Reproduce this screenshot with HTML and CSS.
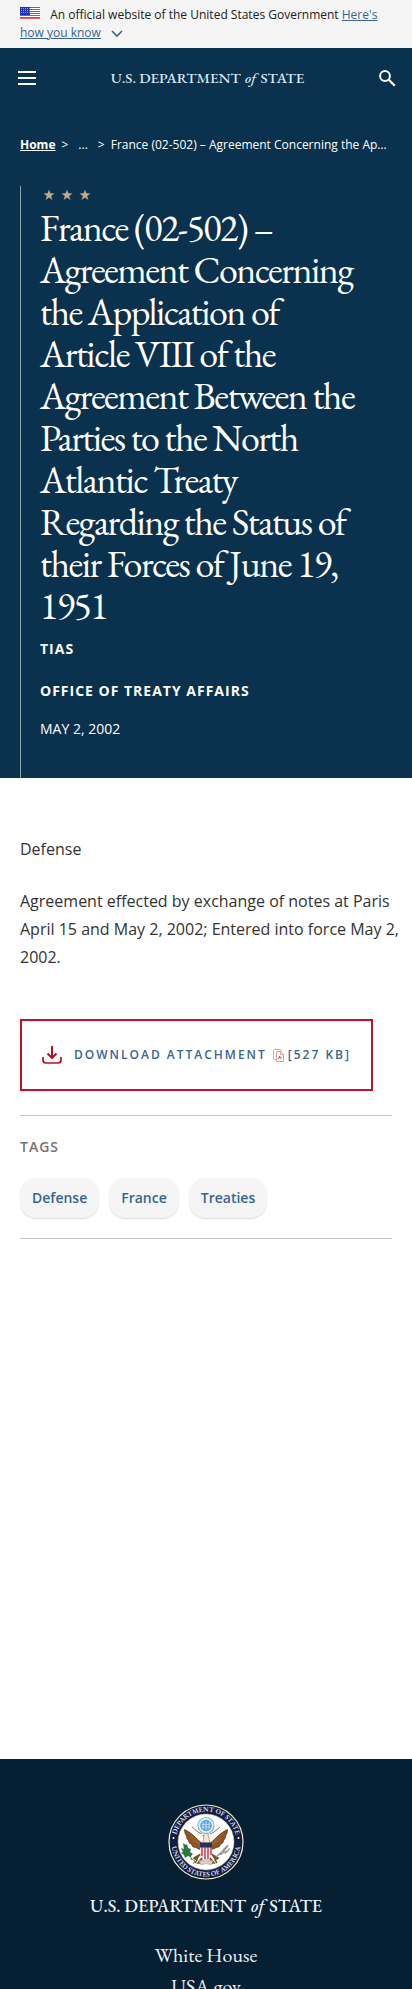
FILE: index.html
```html
<!DOCTYPE html>
<html lang="en">
<head>
<meta charset="utf-8">
<meta name="viewport" content="width=device-width, initial-scale=1">
<title>France (02-502) - United States Department of State</title>
<link rel="stylesheet" href="styles.css">
</head>
<body>
<section class="gov-banner" aria-label="Official government website">
  <svg class="flag" viewBox="0 0 20 12" aria-hidden="true">
    <rect width="20" height="12" fill="#fff"/>
    <path d="M0 .5h20M0 2.5h20M0 4.5h20M0 6.5h20M0 8.5h20M0 10.5h20" stroke="#db3e3e"/>
    <path d="M0 11.5h20" stroke="#e36a62"/>
    <rect width="10" height="8" fill="#1e33b1"/>
    <path d="M1 1.500h9M1 3.500h9M1 5.500h9" stroke="#8f9be0" stroke-dasharray="1 1"/>
  </svg>
  <span>An official website of the United States Government</span>
  <a href="#">Here's how you know</a>
  <svg class="chevron" viewBox="0 0 12 8" aria-hidden="true"><path d="M1 1l5 5 5-5" fill="none" stroke="#3a6491" stroke-width="1.600"/></svg>
</section>

<div class="hero">
  <header class="site-header">
    <button class="icon-button" type="button" aria-label="Menu">
      <svg class="menu-icon" viewBox="0 0 18 14"><path d="M0 1h18M0 7h18M0 13h18" stroke="#fff" stroke-width="2"/></svg>
    </button>
    <a class="brand brand-small" href="#">U.S. DEPARTMENT <i>of</i> STATE</a>
    <button class="icon-button" type="button" aria-label="Search">
      <svg class="search-icon" viewBox="0 0 17 17"><circle cx="6" cy="6" r="4.900" fill="none" stroke="#fff" stroke-width="2"/><path d="M9.500 9.500l6.300 6.300" stroke="#fff" stroke-width="2.300"/></svg>
    </button>
  </header>
  <nav class="breadcrumb" aria-label="Breadcrumb">
    <a href="#">Home</a><span>&gt;</span><span class="crumb-dots">...</span><span>&gt;</span><span class="crumb-current">France (02-502) – Agreement Concerning the Application of Article VIII</span>
  </nav>
  <div class="article-head">
    <svg class="stars" viewBox="0 0 50 12" aria-hidden="true">
      <defs><path id="star" d="M6 .5l1.400 3.800 4.100.1-3.300 2.500 1.200 4L6 8.600 2.600 10.900l1.200-4L.5 4.400l4.100-.1z" fill="#c4a88a"/></defs>
      <use href="#star"/><use href="#star" x="18"/><use href="#star" x="36"/>
    </svg>
    <h1>France (02-502) – Agreement Concerning the Application of Article VIII of the Agreement Between the Parties to the North Atlantic Treaty Regarding the Status of their Forces of June 19, 1951</h1>
    <p class="kicker">TIAS</p>
    <p class="kicker">OFFICE OF TREATY AFFAIRS</p>
    <p class="date">MAY 2, 2002</p>
  </div>
</div>

<main class="content">
  <p>Defense</p>
  <p>Agreement effected by exchange of notes at Paris April 15 and May 2, 2002; Entered into force May 2, 2002.</p>
  <a class="download" href="#">
    <svg class="download-icon" viewBox="0 0 20 18" fill="none" stroke="#b31226" stroke-width="2" aria-hidden="true"><path d="M1 11v3q0 3 3 3h12q3 0 3-3v-3" stroke-width="1.700"/><path d="M10 0v12M5.500 7.500L10 12l4.500-4.500"/></svg>
    <span>DOWNLOAD ATTACHMENT</span>
    <svg class="pdf-icon" viewBox="0 0 11 13" fill="none" stroke="#e9a09b" aria-hidden="true"><path d="M8 3V1.500q0-1-1-1H1.500q-1 0-1 1v8q0 1 1 1H3"/><path d="M3.500 2.500h4l3 3v7h-7zM7.500 2.500v3h3"/><path d="M5 10c2-1 2-3 1.500-3S7 9.500 9 9" stroke="#c5403b"/></svg>
    <span>[527 KB]</span>
  </a>
  <section class="tags">
    <h2>TAGS</h2>
    <div class="tag-list"><a href="#">Defense</a><a href="#">France</a><a href="#">Treaties</a></div>
  </section>
</main>

<footer class="site-footer">
  <svg class="seal" viewBox="0 0 76 76" role="img" aria-label="Department of State seal">
    <defs>
      <path id="ring-top" d="M7.500 38a30.500 30.500 0 0 1 61 0"/>
      <path id="ring-bottom" d="M3.500 38a34.500 34.500 0 0 0 69 0"/>
    </defs>
    <circle cx="38" cy="38" r="37" fill="#111d46" stroke="#f1edbd" stroke-width="1.200"/>
    <circle cx="38" cy="38" r="28" fill="#fff" stroke="#c9bd78" stroke-width=".5"/>
    <g class="seal-text">
      <text><textPath href="#ring-top" startOffset="50%">DEPARTMENT OF STATE</textPath></text>
      <text><textPath href="#ring-bottom" startOffset="50%">UNITED STATES OF AMERICA</textPath></text>
    </g>
    <circle cx="5.500" cy="34" r="1" fill="#fff"/><circle cx="70.500" cy="34" r="1" fill="#fff"/>
    <circle cx="38" cy="21.500" r="8" fill="#e5f2fb" stroke="#79b9e6" stroke-width="1.200"/>
    <circle cx="38" cy="21.500" r="5.800" fill="#5da7dd"/>
    <path d="M35 18v7M38 17v9M41 18v7M34 20.500h8M34 23h8" stroke="#d5e9f7" stroke-width=".7"/>
    <path d="M35 40C30 37 26 30 16.500 25.500q0 4 2 6.500-.5 2 2 4.500-.5 2 3 4 .5 3 4.500 3 2 2.500 7 1.500M41 40c5-3 9-10 18.500-14.500q0 4-2 6.500.5 2-2 4.500.5 2-3 4-.5 3-4.500 3-2 2.500-7 1.500" fill="#8c5524" stroke="#623516" stroke-width=".8"/>
    <path d="M20 29l12 10M22 33l10 7M25 37l8 4M56 29L44 39M54 33l-10 7M51 37l-8 4" stroke="#a86d34" stroke-width=".6"/>
    <path d="M24 23l6 5 4 2M52 23l-6 5-4 2" stroke="#9c7330" fill="none"/>
    <path d="M35 39l1-9q2-2 4 0l2 9z" fill="#eee6d2" stroke="#a97835" stroke-width=".6"/>
    <path d="M36 31l-3 1 3 1z" fill="#d29c26"/>
    <path d="M33 50l-7 4 3 2-2 3M43 50l7 4-3 2 2 3M34 54l-4 5h5M42 54l4 5h-5" fill="#8c5524" stroke="#765027" stroke-width="1.600"/>
    <path d="M32 39h12v10q-1 5-6 7-5-2-6-7z" fill="#f5e7ea"/>
    <path d="M34 43v9M37 43v12M40 43v12M43 43v8" stroke="#b82b45" stroke-width="1.300"/>
    <path d="M32 38.500h12v5H32z" fill="#253064"/>
    <path d="M15 39l3 2 1-1 1 4 3 1-1 3 3 2-3 3-2-1-3 2-1-3-3-2 2-1-2-4 3 1z" fill="#28764a"/>
    <path d="M19 44l5 12" stroke="#3c713a"/><path d="M24 55l3 2-2 3" stroke="#699953" fill="none"/>
    <path d="M48 53l12-11M53 51l7-9M51 51l10-5M55 46l5-5M57 50l5-6" stroke="#969696" stroke-width="1.100"/>
    <path d="M31 57q7-3 14 0l-2 4q-5-3-10 0z" fill="#d8cec1" stroke="#a69784" stroke-width=".5"/>
  </svg>
  <a class="brand brand-large" href="#">U.S. DEPARTMENT <i>of</i> STATE</a>
  <nav class="footer-links" aria-label="Footer"><a href="#">White House</a><a href="#">USA.gov</a></nav>
</footer>
</body>
</html>
```
FILE: styles.css
```css
* { box-sizing: border-box; }
body {
  display: flex;
  flex-direction: column;
  height: 100vh;
  margin: 0;
  overflow: hidden;
  background: #fff;
  color: #333;
  font-family: "Open Sans", "Noto Sans", sans-serif;
}
h1, h2, p { margin: 0; }
a { color: inherit; text-decoration: none; }
svg { flex: none; }
.gov-banner {
  padding: 6px 20px;
  background: #f5f5f5;
  color: #212121;
  font-size: 12px;
  line-height: 18px;
}
.gov-banner a { color: #3a6491; text-decoration: underline; }
.flag { width: 20px; height: 12px; margin-right: 7px; }
.chevron { width: 12px; height: 8px; margin-left: 7px; vertical-align: -1px; }
.hero {
  display: flex;
  flex-direction: column;
  background: #0a314d;
  color: #fff;
}
.site-header {
  display: flex;
  align-items: center;
  justify-content: space-between;
  height: 60px;
  padding: 0 16px 0 18px;
}
.icon-button {
  display: flex;
  padding: 0;
  border: 0;
  background: none;
}
.menu-icon { width: 18px; height: 14px; }
.search-icon { width: 17px; height: 17px; }
.brand {
  font-family: "EB Garamond", "Liberation Serif", serif;
  font-weight: 500;
  white-space: nowrap;
}
.brand i { margin: 0 1px; }
.brand-small { color: #dbe9f5; font-size: 15px; line-height: 20px; }
.breadcrumb {
  display: flex;
  gap: 6px;
  margin: 28px 20px 32px;
  font-size: 12px;
  line-height: 18px;
}
.breadcrumb a { font-weight: 700; text-decoration: underline; }
.crumb-dots { padding: 0 4px; }
.crumb-current {
  min-width: 0;
  overflow: hidden;
  text-overflow: ellipsis;
  white-space: nowrap;
}
.article-head {
  display: flex;
  flex-direction: column;
  margin-left: 20px;
  padding: 3px 48px 38px 19px;
  border-left: 1px solid #8fa3a8;
}
.stars { width: 50px; height: 12px; margin: 0 0 6px 3px; }
h1 {
  margin-bottom: 1px;
  font: 400 38px/42px "EB Garamond", "Liberation Serif", serif;
  letter-spacing: -0.04em;
}
.kicker {
  margin-top: 10px;
  padding-bottom: 10px;
  font-size: 14px;
  font-weight: 700;
  letter-spacing: 1px;
  line-height: 22px;
}
.date { margin-top: 6px; font-size: 14px; line-height: 22px; }
.content {
  display: flex;
  flex: 1;
  flex-direction: column;
  align-items: flex-start;
  padding: 57px 20px 0;
}
.content p {
  margin: 0 -8px 24px 0;
  font-size: 16px;
  line-height: 28px;
}
.download {
  display: flex;
  align-items: center;
  margin: 24px 0;
  padding: 22px 20px;
  border: 2px solid #c5112e;
  color: #3a6491;
  font-size: 12px;
  font-weight: 600;
  letter-spacing: 2px;
  line-height: 24px;
  white-space: nowrap;
}
.download-icon { width: 20px; height: 18px; margin-right: 12px; }
.pdf-icon { width: 11px; height: 13px; margin: 0 4px 0 6px; }
.tags {
  align-self: stretch;
  padding: 20px 0;
  border-top: 1px solid #c4c4c4;
  border-bottom: 1px solid #c4c4c4;
}
h2 {
  margin-bottom: 20px;
  color: #757575;
  font-size: 14px;
  font-weight: 600;
  letter-spacing: 1px;
  line-height: 22px;
}
.tag-list { display: flex; gap: 10px; }
.tag-list a {
  padding: 9px 12px;
  border-radius: 16px;
  background: #f5f5f5;
  box-shadow: 0 1px 1px #dedede;
  color: #3a6491;
  font-size: 14px;
  font-weight: 600;
  line-height: 22px;
}
.site-footer {
  display: flex;
  flex-direction: column;
  align-items: center;
  height: 230px;
  padding-top: 45px;
  background: #071f33;
  color: #eaf4fb;
}
.seal { width: 76px; height: 76px; margin-bottom: 14px; }
.seal-text {
  fill: #e3e6f0;
  font-family: "EB Garamond", "Liberation Serif", serif;
  font-size: 7px;
  font-weight: 600;
  text-anchor: middle;
}
.brand-large { font-size: 18px; line-height: 24px; }
.footer-links {
  display: flex;
  flex-direction: column;
  align-items: center;
  margin-top: 22px;
  font: 20px/31px "EB Garamond", "Liberation Serif", serif;
}
```
